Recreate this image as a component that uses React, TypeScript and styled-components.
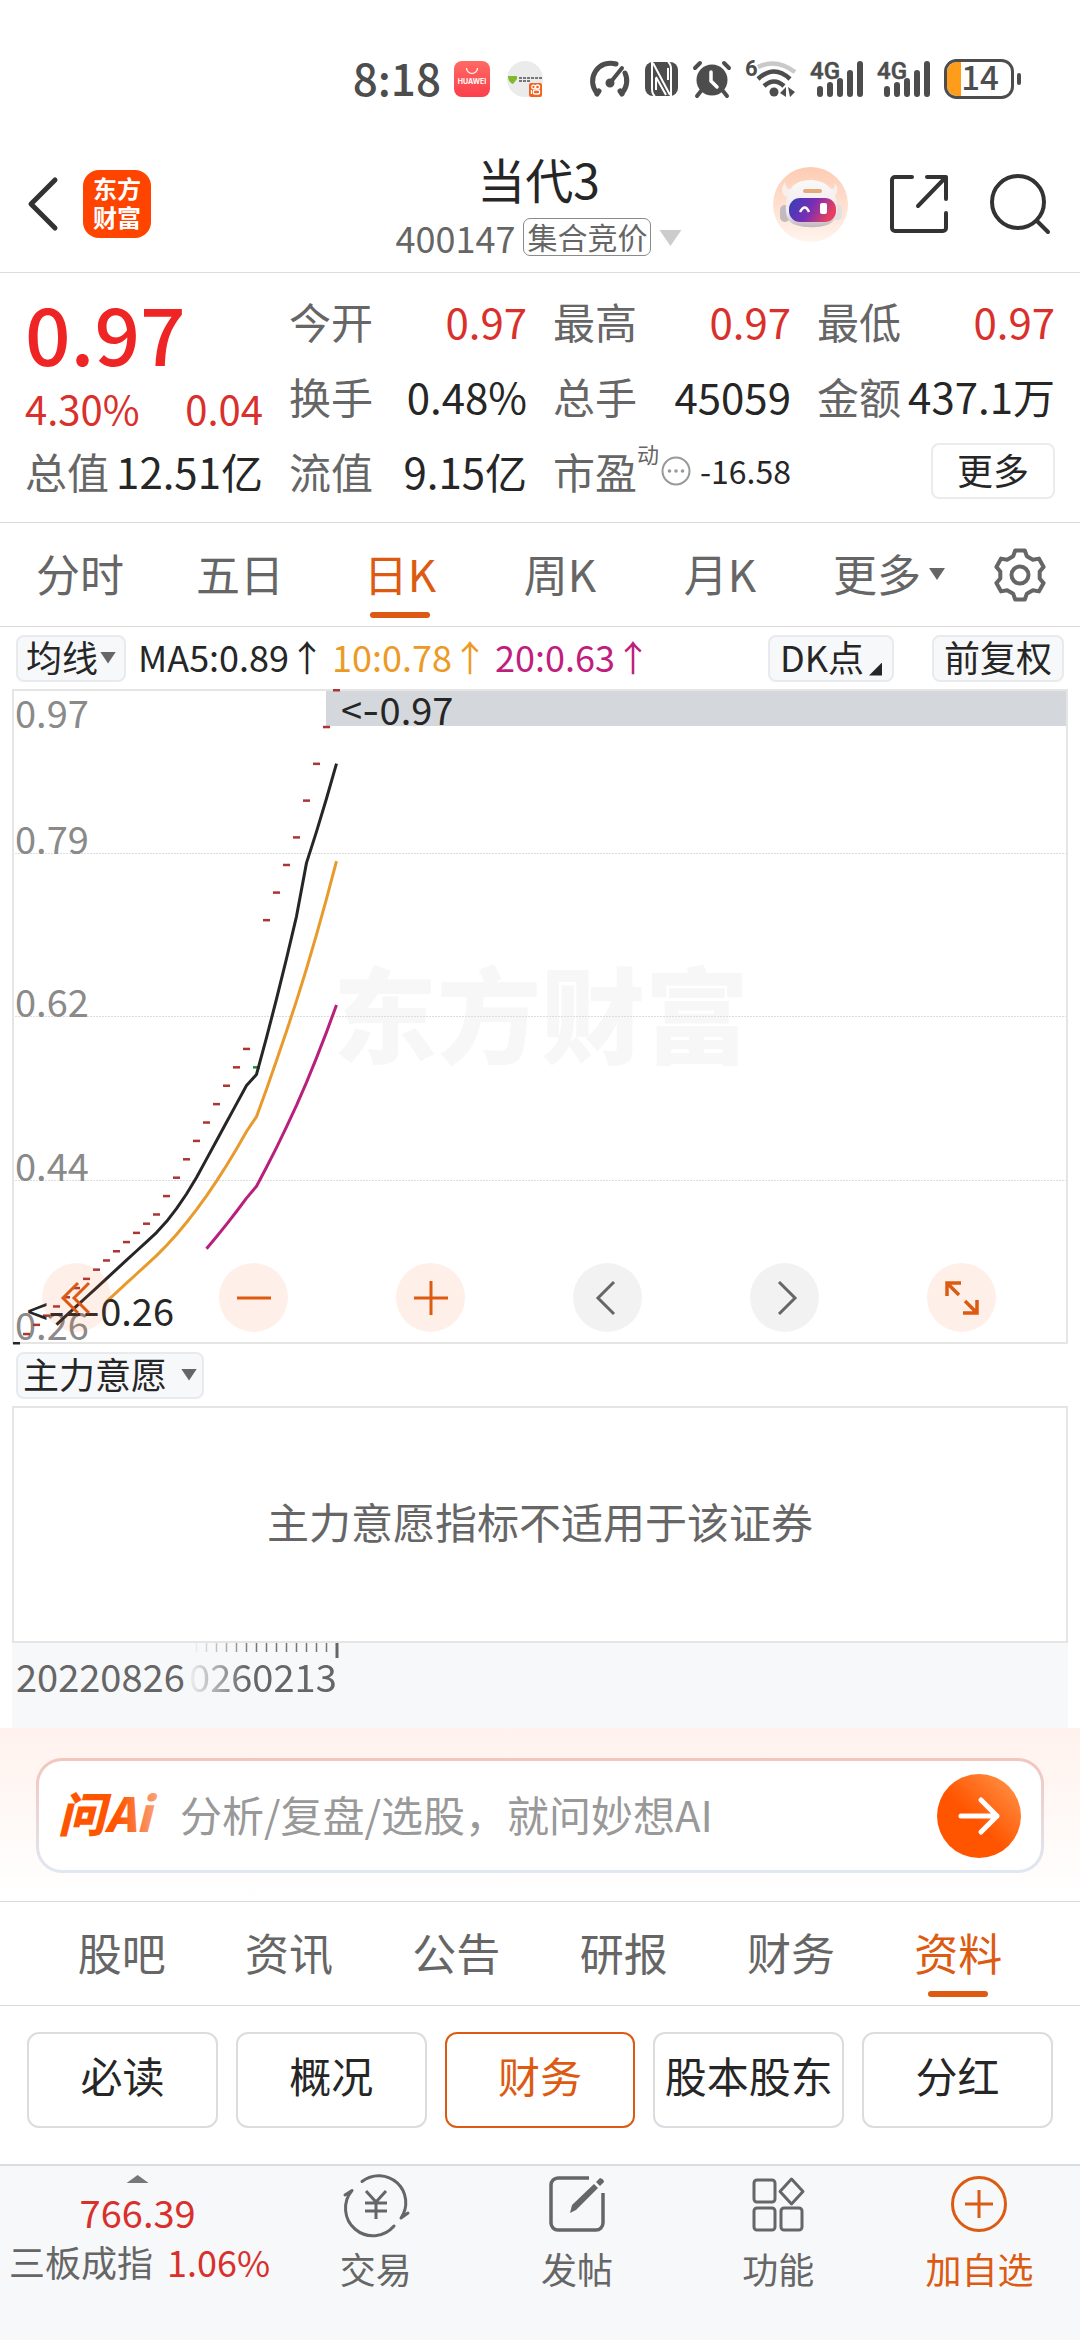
import React from "react";
import styled, { createGlobalStyle } from "styled-components";

const INK = "#262626";
const MUTED = "#666666";
const RED = "#d9302c";
const ACCENT = "#dd5a12";
const LINE = "#dcdcdc";
const FONT = '"Noto Sans CJK SC", "Noto Sans", sans-serif';

const GlobalStyle = createGlobalStyle`
  *, *::before, *::after { box-sizing: border-box; }
  html, body { margin: 0; background: #ffffff; }
  body { font-family: ${FONT}; color: ${INK}; }
  button, input { font: inherit; color: inherit; margin: 0; padding: 0; border: 0; background: none; }
  svg { display: block; flex: none; overflow: visible; }
`;

const Page = styled.div`
  display: flex;
  flex-direction: column;
  min-height: 100vh;
`;

/* ---------- status bar ---------- */

const StatusBar = styled.div`
  display: flex;
  justify-content: flex-end;
  align-items: center;
  gap: 13px;
  height: 62px;
  margin-top: 48px;
  padding-right: 58px;
  color: #4d4d4d;
`;

const Clock = styled.time`
  padding-bottom: 4px;
  font-size: 44px;
  line-height: 62px;
  font-weight: 500;
`;

const Notices = styled.div`
  display: flex;
  gap: 17px;
  margin-right: 32px;
`;

/* ---------- header ---------- */

const Header = styled.header`
  display: grid;
  grid-template-columns: 1fr auto 1fr;
  align-items: center;
  height: 163px;
  padding: 26px 30px 0 27px;
  border-bottom: 1px solid ${LINE};
`;

const HeaderLeft = styled.div`
  display: flex;
  align-items: center;
  gap: 24px;
`;

const HeaderRight = styled.div`
  display: flex;
  align-items: center;
  justify-content: flex-end;
  gap: 42px;
`;

const IconButton = styled.button`
  display: flex;
  align-items: center;
  justify-content: center;
`;

const BrandLogo = styled.button`
  width: 68px;
  height: 68px;
  padding: 2px 0 6px;
  border-radius: 16px;
  background: #ff4400;
  color: #ffffff;
  font-size: 24px;
  line-height: 29px;
  font-weight: 700;
  text-align: center;
`;

const TitleBlock = styled.div`
  display: flex;
  flex-direction: column;
  align-items: center;
  gap: 6px;
  padding-bottom: 9px;
`;

const Title = styled.h1`
  margin: 0;
  font-size: 48px;
  line-height: 68px;
  font-weight: 400;
`;

const SubTitle = styled.button`
  display: flex;
  align-items: center;
  gap: 8px;
  color: ${MUTED};
  font-size: 36px;
  line-height: 38px;
`;

const PhaseBadge = styled.span`
  padding: 0 3px 2px;
  border: 1px solid #8a8a8a;
  border-radius: 7px;
  font-size: 30px;
  line-height: 34px;
`;

const Caret = styled.span<{ $width?: number; $height?: number; $color?: string; $up?: boolean }>`
  flex: none;
  width: ${(p) => p.$width ?? 16}px;
  height: ${(p) => p.$height ?? 12}px;
  margin-top: 3px;
  background: ${(p) => p.$color ?? "#666666"};
  clip-path: ${(p) => (p.$up ? "polygon(50% 0, 100% 100%, 0 100%)" : "polygon(0 0, 100% 0, 50% 100%)")};
`;

/* ---------- quote ---------- */

const Quote = styled.section`
  display: grid;
  grid-template-columns: repeat(4, 1fr);
  grid-template-rows: repeat(3, 75px);
  column-gap: 26px;
  padding: 10px 25px 14px;
  border-bottom: 1px solid ${LINE};
  font-size: 42px;
  line-height: 75px;
`;

const PriceBlock = styled.div`
  grid-row: span 2;
  display: flex;
  flex-direction: column;
  gap: 4px;
  color: ${RED};
`;

const Price = styled.strong`
  font-size: 80px;
  line-height: 96px;
  font-weight: 500;
  color: #ee2524;
`;

const Change = styled.div`
  display: flex;
  justify-content: space-between;
  font-size: 40px;
  line-height: 50px;
`;

const Cell = styled.div`
  display: flex;
  justify-content: space-between;
  align-items: center;
  white-space: nowrap;
`;

const CellLabel = styled.span`
  color: ${MUTED};
`;

const CellValue = styled.span<{ $red?: boolean; $small?: boolean }>`
  color: ${(p) => (p.$red ? RED : INK)};
  font-size: ${(p) => (p.$small ? 32 : 42)}px;
`;

const Superscript = styled.span`
  align-self: flex-start;
  margin-right: 2px;
  color: ${MUTED};
  font-size: 22px;
  line-height: 40px;
`;

const PeLabel = styled.div`
  display: flex;
  align-items: center;
  height: 75px;
`;

const MoreButton = styled.button`
  justify-self: end;
  align-self: center;
  width: 124px;
  height: 56px;
  padding-bottom: 3px;
  border: 2px solid #ebebeb;
  border-radius: 8px;
  font-size: 36px;
  line-height: 48px;
`;

/* ---------- tabs ---------- */

const TabRow = styled.nav<{ $columns: string; $pad?: number }>`
  display: grid;
  grid-template-columns: ${(p) => p.$columns};
  height: 104px;
  padding: 0 ${(p) => p.$pad ?? 0}px;
  border-bottom: 1px solid ${LINE};
`;

const Tab = styled.button<{ $active?: boolean }>`
  position: relative;
  display: flex;
  justify-content: center;
  align-items: center;
  gap: 8px;
  padding-bottom: 4px;
  color: ${(p) => (p.$active ? ACCENT : MUTED)};
  font-size: 44px;
  line-height: 64px;
  white-space: nowrap;
  &::after {
    content: "";
    display: ${(p) => (p.$active ? "block" : "none")};
    position: absolute;
    bottom: 8px;
    left: calc(50% - 30px);
    width: 60px;
    height: 6px;
    border-radius: 3px;
    background: ${ACCENT};
  }
`;

const MoreTab = styled(Tab)`
  padding-left: 18px;
`;

const GearTab = styled(Tab)`
  padding-bottom: 0;
`;

/* ---------- chart ---------- */

const ToolRow = styled.div`
  display: flex;
  align-items: center;
  height: 62px;
  padding: 0 16px;
  font-size: 36px;
  line-height: 44px;
  white-space: nowrap;
`;

const ToolButton = styled.button<{ $padX?: number; $gap?: number }>`
  display: flex;
  align-items: center;
  gap: ${(p) => p.$gap ?? 2}px;
  height: 47px;
  padding: 0 ${(p) => p.$padX ?? 8}px 4px;
  border: 2px solid #e9eaed;
  border-radius: 8px;
  background: #f7f8fa;
`;

const Averages = styled.div`
  display: flex;
  gap: 7px;
  margin-left: 12px;
  padding-bottom: 4px;
`;

const Average = styled.span<{ $color: string }>`
  color: ${(p) => p.$color};
`;

const ToolsRight = styled.div`
  display: flex;
  gap: 38px;
  margin-left: auto;
`;

const Corner = styled.span`
  align-self: flex-end;
  width: 13px;
  height: 13px;
  background: ${INK};
  clip-path: polygon(100% 0, 100% 100%, 0 100%);
`;

const ChartFrame = styled.div`
  position: relative;
  margin: 0 12px;
  & > svg { width: 100%; height: auto; }
`;

const ChartControls = styled.div`
  position: absolute;
  left: 0;
  right: 0;
  bottom: 12px;
  display: flex;
  justify-content: space-between;
  padding: 0 72px 0 30px;
`;

const RoundButton = styled.button<{ $grey?: boolean }>`
  display: flex;
  align-items: center;
  justify-content: center;
  width: 69px;
  height: 69px;
  border-radius: 50%;
  background: ${(p) => (p.$grey ? "rgba(0, 0, 0, 0.05)" : "rgba(250, 110, 30, 0.1)")};
  color: ${(p) => (p.$grey ? MUTED : ACCENT)};
`;

const IndicatorPanel = styled.div`
  display: flex;
  align-items: center;
  justify-content: center;
  height: 237px;
  margin: 0 12px;
  padding-bottom: 8px;
  border: 2px solid #e5e5e5;
  color: ${MUTED};
  font-size: 42px;
  line-height: 60px;
`;

const DateAxis = styled.div`
  position: relative;
  height: 85px;
  margin: 0 12px;
  background: #f7f8fa;
  color: ${MUTED};
  font-size: 38px;
  line-height: 40px;
`;

const StartDate = styled.span`
  position: absolute;
  left: 4px;
  top: 13px;
`;

const EndDate = styled.span`
  position: absolute;
  left: 156px;
  top: 13px;
  mask-image: linear-gradient(90deg, transparent 18px, #000 78px);
`;

/* ---------- ask AI ---------- */

const AskSection = styled.section`
  padding: 30px 36px 28px;
  border-bottom: 1px solid ${LINE};
  background: linear-gradient(#fff2ed, #ffffff);
`;

const AskBox = styled.form`
  display: flex;
  align-items: center;
  gap: 22px;
  height: 115px;
  padding: 0 20px 0 21px;
  border: 3px solid transparent;
  border-radius: 26px;
  background: linear-gradient(#ffffff, #ffffff) padding-box, linear-gradient(#f3c5bd, #dfe8f3) border-box;
`;

const AskInput = styled.input`
  flex: 1;
  min-width: 0;
  padding-bottom: 4px;
  outline: 0;
  font-size: 42px;
  line-height: 60px;
  &::placeholder { color: #999999; opacity: 1; }
`;

const SendButton = styled.button`
  display: flex;
  align-items: center;
  justify-content: center;
  width: 84px;
  height: 84px;
  border-radius: 50%;
  background: linear-gradient(45deg, #ff5500 45%, #ff9a50);
`;

/* ---------- chips ---------- */

const Chips = styled.div`
  display: grid;
  grid-template-columns: repeat(5, 1fr);
  gap: 18px;
  padding: 26px 27px 36px;
`;

const Chip = styled.button<{ $active?: boolean }>`
  height: 96px;
  padding-bottom: 10px;
  border: 2px solid ${(p) => (p.$active ? ACCENT : "#dadcdf")};
  border-radius: 12px;
  color: ${(p) => (p.$active ? ACCENT : INK)};
  font-size: 42px;
  line-height: 60px;
  white-space: nowrap;
`;

/* ---------- footer ---------- */

const Footer = styled.footer`
  flex: 1;
  display: flex;
  align-items: flex-start;
  border-top: 2px solid #d9dce1;
  background: #f7f8fa;
  color: ${MUTED};
  font-size: 36px;
`;

const IndexButton = styled.button`
  flex: 275 1 0;
  display: flex;
  flex-direction: column;
  align-items: center;
  padding-top: 6px;
  white-space: nowrap;
`;

const IndexValue = styled.span`
  margin-top: 4px;
  color: ${RED};
  font-size: 38px;
  line-height: 50px;
`;

const IndexLine = styled.span`
  display: flex;
  gap: 14px;
  padding-left: 4px;
  line-height: 48px;
`;

const IndexChange = styled.span`
  color: ${RED};
`;

const FooterButton = styled.button<{ $active?: boolean }>`
  flex: 201 1 0;
  display: flex;
  flex-direction: column;
  align-items: center;
  gap: 11px;
  padding-top: 9px;
  color: ${(p) => (p.$active ? ACCENT : MUTED)};
  line-height: 48px;
`;

/* ---------- icons ---------- */

const ShopIcon = () => (
  <svg width="36" height="36" viewBox="0 0 36 36">
    <defs>
      <linearGradient id="shop" x1="0" y1="0" x2="0" y2="1">
        <stop offset="0" stopColor="#ff6a63" />
        <stop offset="1" stopColor="#fb3f4c" />
      </linearGradient>
    </defs>
    <rect width="36" height="36" rx="8" fill="url(#shop)" />
    <path d="M12.500 7a5.500 5.500 0 0 0 11 0" fill="none" stroke="#fff" strokeWidth="1.200" />
    <text x="18" y="23" textAnchor="middle" fontSize="7" fontWeight="700" fill="#fff" fontFamily="Inter, sans-serif">HUAWEI</text>
  </svg>
);

const NoticeIcon = () => (
  <svg width="36" height="36" viewBox="0 0 36 36">
    <circle cx="18" cy="18" r="18" fill="#ebebeb" />
    <path d="M1 15h9v3l-4 5c-3-1-5-4-5-8Z" fill="#83b927" />
    <path d="M12 17h23M12 20h11" stroke="#777" strokeWidth="2" strokeDasharray="3 1" />
    <rect x="22" y="22" width="13" height="14" rx="2" fill="#f4631e" />
    <g fill="none" stroke="#fff" strokeWidth="1.300">
      <circle cx="26.500" cy="26" r="1.800" />
      <circle cx="30.500" cy="26" r="2" />
      <rect x="26.500" y="29" width="6" height="4" rx="1" />
      <path d="M24.500 29v4" />
    </g>
  </svg>
);

const GaugeIcon = () => (
  <svg width="43" height="38" viewBox="0 0 43 38" fill="none" stroke="#4d4d4d" strokeWidth="5" strokeLinecap="round">
    <path d="M9 33A18 18 0 0 1 28 4" />
    <path d="M37 13A18 18 0 0 1 34 33" />
    <path d="M9 34l2-3M34 34l-2-3" />
    <path d="M22 23L34 8" strokeWidth="4" />
    <circle cx="22" cy="23" r="2.500" strokeWidth="4" />
  </svg>
);

const NfcIcon = () => (
  <svg width="35" height="36" viewBox="0 0 35 36">
    <rect x="1" y="1" width="33" height="34" rx="8" fill="#4d4d4d" />
    <path d="M8 1v27q0 5 3 7M27 35V8q0-5-3-7" fill="none" stroke="#fff" strokeWidth="2" />
    <path d="M9 2l17 32M12 16l10 18M12 17v12M24 19V7" fill="none" stroke="#fff" strokeWidth="2" />
  </svg>
);

const AlarmIcon = () => (
  <svg width="40" height="38" viewBox="0 0 40 38">
    <circle cx="20" cy="20" r="15.500" fill="#4d4d4d" />
    <path d="M3 8l5-5M37 8l-5-5M9 31l-4 5M31 31l4 5" stroke="#4d4d4d" strokeWidth="4" strokeLinecap="round" />
    <path d="M19 12v9l6 6" fill="none" stroke="#fff" strokeWidth="3.500" strokeLinecap="round" />
  </svg>
);

const WifiIcon = () => (
  <svg width="52" height="40" viewBox="0 0 52 40" fill="none" strokeWidth="4.500">
    <text x="0" y="17" fontSize="22" fontWeight="700" fill="#4d4d4d" fontFamily="Roboto, sans-serif">6</text>
    <path d="M13 8q18-9 37 5" stroke="#c9c9c9" />
    <path d="M13 20q16-15 32 0" stroke="#4d4d4d" />
    <path d="M19 27q10-9 20 0" stroke="#4d4d4d" />
    <circle cx="29" cy="33" r="4.500" fill="#4d4d4d" />
    <path d="M41 28v10l-6-4zM43 28l7 5-5 5z" fill="#4d4d4d" />
  </svg>
);

const SignalIcon = () => (
  <svg width="54" height="38" viewBox="0 0 54 38">
    <text x="0" y="19" fontSize="24" fontWeight="500" fill="#4d4d4d" stroke="#4d4d4d" strokeWidth="0.500" fontFamily="Roboto, sans-serif">4G</text>
    <path d="M10 29v5M20 25v9M30 21v13M40 13v21M50 4v30" stroke="#4d4d4d" strokeWidth="6" strokeLinecap="round" />
  </svg>
);

const BatteryIcon = () => (
  <svg width="78" height="40" viewBox="0 0 78 40">
    <path d="M13 3h4v34h-4a10 10 0 0 1-10-10V13a10 10 0 0 1 10-10Z" fill="#ff9c1a" />
    <rect x="1.500" y="1.500" width="67" height="37" rx="11" fill="none" stroke="#4d4d4d" strokeWidth="3" />
    <rect x="73" y="14" width="4" height="12" rx="2" fill="#4d4d4d" />
    <text x="36" y="31" textAnchor="middle" fontSize="33" fontWeight="500" fill="#4d4d4d" fontFamily='"Noto Sans CJK SC", sans-serif'>14</text>
  </svg>
);

const BackIcon = () => (
  <svg width="32" height="56" viewBox="0 0 32 56" fill="none" stroke="#333" strokeWidth="5" strokeLinecap="round" strokeLinejoin="round">
    <path d="M28 4L4 28l24 24" />
  </svg>
);

const RobotIcon = () => (
  <svg width="75" height="75" viewBox="0 0 75 75">
    <defs>
      <linearGradient id="halo" x1="0" y1="0" x2="0" y2="1">
        <stop offset="0" stopColor="#fecbb2" />
        <stop offset="1" stopColor="#fff4ee" />
      </linearGradient>
      <linearGradient id="visor" x1="0" y1="0" x2="1" y2="0.3">
        <stop offset="0" stopColor="#3340b8" />
        <stop offset="0.550" stopColor="#7a2eb4" />
        <stop offset="1" stopColor="#e5405f" />
      </linearGradient>
      <linearGradient id="shell" x1="0" y1="0" x2="0" y2="1">
        <stop offset="0" stopColor="#fbf8f8" />
        <stop offset="0.700" stopColor="#efeaec" />
        <stop offset="1" stopColor="#bfb5bb" />
      </linearGradient>
    </defs>
    <circle cx="37.500" cy="37.500" r="37.500" fill="url(#halo)" />
    <rect x="7" y="38" width="10" height="17" rx="5" fill="#c2babf" />
    <rect x="60" y="38" width="9" height="15" rx="4" fill="#e5dfe2" />
    <path d="M13 30C8 26 8 20 12 15c0 6 4 8 10 8zM60 30c5-3 6-9 2-14 0 6-3 7-9 7z" fill="#f7efee" />
    <path d="M37 13c16 0 25 9 27 24 1 11-3 19-10 21-9 3-22 3-31 0-8-2-11-10-10-21C14 21 22 13 37 13Z" fill="url(#shell)" />
    <rect x="30" y="22" width="19" height="4" rx="2" fill="#e3ab79" />
    <rect x="16" y="31" width="47" height="24" rx="11" fill="url(#visor)" />
    <path d="M27 45q5-9 9 0" fill="none" stroke="#fff" strokeWidth="2.500" />
    <rect x="47" y="36" width="7" height="11" rx="2" fill="#fff" />
  </svg>
);

const ShareIcon = () => (
  <svg width="58" height="58" viewBox="0 0 58 58" fill="none" stroke="#333" strokeWidth="4" strokeLinecap="round" strokeLinejoin="round">
    <path d="M22 2H5a3 3 0 0 0-3 3v48a3 3 0 0 0 3 3h48a3 3 0 0 0 3-3V38" />
    <path d="M37 2h19v22M56 2L28 31" />
  </svg>
);

const SearchIcon = () => (
  <svg width="60" height="60" viewBox="0 0 60 60" fill="none" stroke="#333" strokeWidth="4" strokeLinecap="round">
    <circle cx="28" cy="28" r="26" />
    <path d="M47 47l11 11" />
  </svg>
);

const DotsIcon = () => (
  <svg width="30" height="30" viewBox="0 0 30 30" fill="#999">
    <circle cx="15" cy="15" r="13.500" fill="none" stroke="#999" strokeWidth="2" />
    <circle cx="8.500" cy="15" r="1.800" />
    <circle cx="15" cy="15" r="1.800" />
    <circle cx="21.500" cy="15" r="1.800" />
  </svg>
);

const gearOutline = Array.from({ length: 6 }, (_, tooth) =>
  [[-11, 25], [11, 25], [20, 20], [40, 20]].map(([deg, radius]) => {
    const angle = ((tooth * 60 + deg - 90) * Math.PI) / 180;
    return `${(27 + radius * Math.cos(angle)).toFixed(1)},${(27 + radius * Math.sin(angle)).toFixed(1)}`;
  }).join(" ")
).join(" ");

const GearIcon = () => (
  <svg width="54" height="54" viewBox="0 0 54 54" fill="none" stroke="#666" strokeWidth="4" strokeLinejoin="round">
    <polygon points={gearOutline} />
    <circle cx="27" cy="27" r="8.500" />
  </svg>
);

const FastBackIcon = () => (
  <svg width="34" height="34" viewBox="0 0 34 34" fill="none" stroke="currentColor" strokeWidth="3">
    <path d="M18 2L3 17l15 15M29 2L14 17l15 15" />
  </svg>
);
const MinusIcon = () => (
  <svg width="34" height="34" viewBox="0 0 34 34" stroke="currentColor" strokeWidth="3"><path d="M0 17h34" /></svg>
);
const PlusIcon = () => (
  <svg width="34" height="34" viewBox="0 0 34 34" stroke="currentColor" strokeWidth="3"><path d="M0 17h34M17 0v34" /></svg>
);
const PrevIcon = () => (
  <svg width="34" height="34" viewBox="0 0 34 34" fill="none" stroke="currentColor" strokeWidth="3"><path d="M23 1L7 17l16 16" /></svg>
);
const NextIcon = () => (
  <svg width="34" height="34" viewBox="0 0 34 34" fill="none" stroke="currentColor" strokeWidth="3"><path d="M11 1l16 16-16 16" /></svg>
);
const ExpandIcon = () => (
  <svg width="34" height="34" viewBox="0 0 34 34" fill="none" stroke="currentColor" strokeWidth="3.500">
    <path d="M2 15V2h14M2 2l12 12M32 19v13H18M32 32L20 20" />
  </svg>
);

const AskLogo = () => (
  <svg width="98" height="54" viewBox="0 0 98 54">
    <defs>
      <linearGradient id="ask" x1="0" y1="0" x2="1" y2="0">
        <stop offset="0.600" stopColor="#ff5500" />
        <stop offset="1" stopColor="#f9a27c" />
      </linearGradient>
    </defs>
    <text x="-2" y="43" fontSize="47" fontWeight="900" fontStyle="italic" fill="url(#ask)" fontFamily='"Noto Sans CJK SC", sans-serif'>问Ai</text>
  </svg>
);

const ArrowIcon = () => (
  <svg width="42" height="38" viewBox="0 0 42 38" fill="none" stroke="#fff" strokeWidth="5" strokeLinecap="round" strokeLinejoin="round">
    <path d="M3 19h36M23 3l16 16-16 16" />
  </svg>
);

const TradeIcon = () => (
  <svg width="66" height="58" viewBox="0 0 66 58" fill="none" stroke="#666" strokeWidth="3" strokeLinecap="round" strokeLinejoin="round">
    <path d="M19 6.500A27 27 0 0 1 58 43l7-5" />
    <path d="M51 51A27 27 0 0 1 9 15.500L2 20" />
    <path d="M23 16l10 11 10-11M22 28h22M22 36h22M33 27v17" strokeLinecap="butt" />
  </svg>
);

const PostIcon = () => (
  <svg width="58" height="58" viewBox="0 0 58 58" fill="none" stroke="#666" strokeWidth="3.500" strokeLinecap="butt">
    <path d="M41 3H10a7 7 0 0 0-7 7v38a7 7 0 0 0 7 7h38a7 7 0 0 0 7-7V18" />
    <path d="M22 38l2-8L46 9l4 4-22 22zM48 7l4-4q4 1 4 4l-4 4z" fill="#666" stroke="none" />
  </svg>
);

const AppsIcon = () => (
  <svg width="58" height="58" viewBox="0 0 58 58" fill="none" stroke="#666" strokeWidth="3" strokeLinejoin="round">
    <rect x="5" y="5" width="21" height="22" rx="3" />
    <rect x="5" y="33" width="21" height="22" rx="3" />
    <rect x="32" y="33" width="21" height="22" rx="3" />
    <path d="M42.500 4l11.500 12.500-11.500 12.500L31 16.500z" />
  </svg>
);

const AddIcon = () => (
  <svg width="58" height="58" viewBox="0 0 58 58" fill="none" stroke="currentColor" strokeWidth="3">
    <circle cx="29" cy="29" r="26.500" />
    <path d="M15 29h28M29 15v28" />
  </svg>
);

/* ---------- daily K chart ---------- */

const closes = [
  0.26, 0.27, 0.28, 0.29, 0.3, 0.31, 0.32, 0.33, 0.34, 0.35, 0.36, 0.37, 0.38, 0.39, 0.4, 0.42, 0.44,
  0.46, 0.48, 0.5, 0.52, 0.54, 0.56, 0.58, 0.56, 0.72, 0.75, 0.78, 0.81, 0.85, 0.89, 0.93, 0.97,
];

const xAt = (index: number) => 4.5 + index * 10;
const yAt = (price: number) => 1 + ((0.97 - price) / 0.71) * 653;

const averageLine = (span: number) =>
  closes
    .map((_, i) => {
      if (i < span - 1) return null;
      const mean = closes.slice(i - span + 1, i + 1).reduce((sum, v) => sum + v, 0) / span;
      return `${xAt(i)},${yAt(mean).toFixed(1)}`;
    })
    .filter(Boolean)
    .join(" ");

const markerColor = (i: number) => {
  if (i === 0) return "#262626";
  return closes[i] < closes[i - 1] ? "#1d8b3c" : "#ad3434";
};

const scaleLabels: [string, number][] = [
  ["0.97", 39],
  ["0.79", 165],
  ["0.62", 328],
  ["0.44", 492],
  ["0.26", 651],
];

const WIDE_DASH = "Inter, sans-serif";

const KChart = () => (
  <svg viewBox="0 0 1056 655" fontFamily={FONT} fontSize="38" role="img" aria-label="日K">
    <text x="529" y="367" textAnchor="middle" fontSize="104" fontWeight="900" fill="#f7f7f7">东方财富</text>
    <rect x="314" y="1" width="742" height="36" fill="#d4d7dc" />
    {[164.5, 327.5, 491.5].map((y) => (
      <line key={y} x1="0" x2="1056" y1={y} y2={y} stroke="#dddddd" strokeDasharray="2 1" />
    ))}
    <rect x="1" y="1" width="1054" height="653" fill="none" stroke="#e5e5e5" strokeWidth="2" />
    {scaleLabels.map(([label, y]) => (
      <text key={label} x="3" y={y} fill="#8a8a8a">{label}</text>
    ))}
    {closes.map((price, i) => (
      <rect key={i} x={xAt(i) - 3.5} y={yAt(price) - 1} width="7" height="2.500" fill={markerColor(i)} />
    ))}
    <g fill="none" strokeWidth="3" strokeLinejoin="round">
      <polyline points={averageLine(5)} stroke="#262626" />
      <polyline points={averageLine(10)} stroke="#e89a2c" />
      <polyline points={averageLine(20)} stroke="#b8207c" />
    </g>
    <text x="329" y="36" fill={INK}>&lt;<tspan fontFamily={WIDE_DASH}>-</tspan>0.97</text>
    <text x="162" y="637" fill={INK} textAnchor="end">&lt;<tspan fontFamily={WIDE_DASH}>---</tspan>0.26</text>
  </svg>
);

const AxisTicks = () => (
  <svg width="340" height="16" viewBox="0 0 340 16" stroke="#777">
    {Array.from({ length: 14 }, (_, i) => (
      <path key={i} d={`M${184.500 + i * 10} 0v9`} strokeWidth="1.500" opacity={Math.min(1, 0.1 + i * 0.16)} />
    ))}
    <path d="M325 0v15" strokeWidth="3" stroke="#666" />
  </svg>
);

/* ---------- page ---------- */

export default function App() {
  return (
    <>
      <GlobalStyle />
      <Page>
        <StatusBar>
          <Clock>8:18</Clock>
          <Notices>
            <ShopIcon />
            <NoticeIcon />
          </Notices>
          <GaugeIcon />
          <NfcIcon />
          <AlarmIcon />
          <WifiIcon />
          <SignalIcon />
          <SignalIcon />
          <BatteryIcon />
        </StatusBar>

        <Header>
          <HeaderLeft>
            <IconButton aria-label="返回"><BackIcon /></IconButton>
            <BrandLogo>东方<br />财富</BrandLogo>
          </HeaderLeft>
          <TitleBlock>
            <Title>当代3</Title>
            <SubTitle>
              400147<PhaseBadge>集合竞价</PhaseBadge>
              <Caret $width={22} $height={16} $color="#cccccc" />
            </SubTitle>
          </TitleBlock>
          <HeaderRight>
            <IconButton aria-label="助手"><RobotIcon /></IconButton>
            <IconButton aria-label="分享"><ShareIcon /></IconButton>
            <IconButton aria-label="搜索"><SearchIcon /></IconButton>
          </HeaderRight>
        </Header>

        <Quote>
          <PriceBlock>
            <Price>0.97</Price>
            <Change><span>4.30%</span><span>0.04</span></Change>
          </PriceBlock>
          <Cell><CellLabel>今开</CellLabel><CellValue $red>0.97</CellValue></Cell>
          <Cell><CellLabel>最高</CellLabel><CellValue $red>0.97</CellValue></Cell>
          <Cell><CellLabel>最低</CellLabel><CellValue $red>0.97</CellValue></Cell>
          <Cell><CellLabel>换手</CellLabel><CellValue>0.48%</CellValue></Cell>
          <Cell><CellLabel>总手</CellLabel><CellValue>45059</CellValue></Cell>
          <Cell><CellLabel>金额</CellLabel><CellValue>437.1万</CellValue></Cell>
          <Cell><CellLabel>总值</CellLabel><CellValue>12.51亿</CellValue></Cell>
          <Cell><CellLabel>流值</CellLabel><CellValue>9.15亿</CellValue></Cell>
          <Cell>
            <PeLabel>
              <CellLabel>市盈</CellLabel>
              <Superscript>动</Superscript>
              <DotsIcon />
            </PeLabel>
            <CellValue $small>-16.58</CellValue>
          </Cell>
          <MoreButton>更多</MoreButton>
        </Quote>

        <TabRow $columns="repeat(6, 4fr) 3fr">
          <Tab>分时</Tab>
          <Tab>五日</Tab>
          <Tab $active>日K</Tab>
          <Tab>周K</Tab>
          <Tab>月K</Tab>
          <MoreTab>更多<Caret /></MoreTab>
          <GearTab aria-label="设置"><GearIcon /></GearTab>
        </TabRow>

        <ToolRow>
          <ToolButton>均线<Caret /></ToolButton>
          <Averages>
            <Average $color={INK}>MA5:0.89↑</Average>
            <Average $color="#ec9a26">10:0.78↑</Average>
            <Average $color="#c01e7e">20:0.63↑</Average>
          </Averages>
          <ToolsRight>
            <ToolButton $padX={10} $gap={5}>DK点<Corner /></ToolButton>
            <ToolButton $padX={10}>前复权</ToolButton>
          </ToolsRight>
        </ToolRow>

        <ChartFrame>
          <KChart />
          <ChartControls>
            <RoundButton aria-label="最早"><FastBackIcon /></RoundButton>
            <RoundButton aria-label="缩小"><MinusIcon /></RoundButton>
            <RoundButton aria-label="放大"><PlusIcon /></RoundButton>
            <RoundButton $grey aria-label="左移"><PrevIcon /></RoundButton>
            <RoundButton $grey aria-label="右移"><NextIcon /></RoundButton>
            <RoundButton aria-label="全屏"><ExpandIcon /></RoundButton>
          </ChartControls>
        </ChartFrame>

        <ToolRow>
          <ToolButton $padX={5} $gap={14}>主力意愿<Caret /></ToolButton>
        </ToolRow>
        <IndicatorPanel>主力意愿指标不适用于该证券</IndicatorPanel>
        <DateAxis>
          <AxisTicks />
          <EndDate>20260213</EndDate>
          <StartDate>20220826</StartDate>
        </DateAxis>

        <AskSection>
          <AskBox onSubmit={(event) => event.preventDefault()}>
            <AskLogo />
            <AskInput aria-label="问Ai" placeholder="分析/复盘/选股，就问妙想AI" />
            <SendButton type="submit" aria-label="发送"><ArrowIcon /></SendButton>
          </AskBox>
        </AskSection>

        <TabRow $columns="repeat(6, 1fr)" $pad={38}>
          <Tab>股吧</Tab>
          <Tab>资讯</Tab>
          <Tab>公告</Tab>
          <Tab>研报</Tab>
          <Tab>财务</Tab>
          <Tab $active>资料</Tab>
        </TabRow>

        <Chips>
          <Chip>必读</Chip>
          <Chip>概况</Chip>
          <Chip $active>财务</Chip>
          <Chip>股本股东</Chip>
          <Chip>分红</Chip>
        </Chips>

        <Footer>
          <IndexButton>
            <Caret $width={22} $height={8} $up $color="#777777" />
            <IndexValue>766.39</IndexValue>
            <IndexLine>三板成指<IndexChange>1.06%</IndexChange></IndexLine>
          </IndexButton>
          <FooterButton><TradeIcon />交易</FooterButton>
          <FooterButton><PostIcon />发帖</FooterButton>
          <FooterButton><AppsIcon />功能</FooterButton>
          <FooterButton $active><AddIcon />加自选</FooterButton>
        </Footer>
      </Page>
    </>
  );
}
